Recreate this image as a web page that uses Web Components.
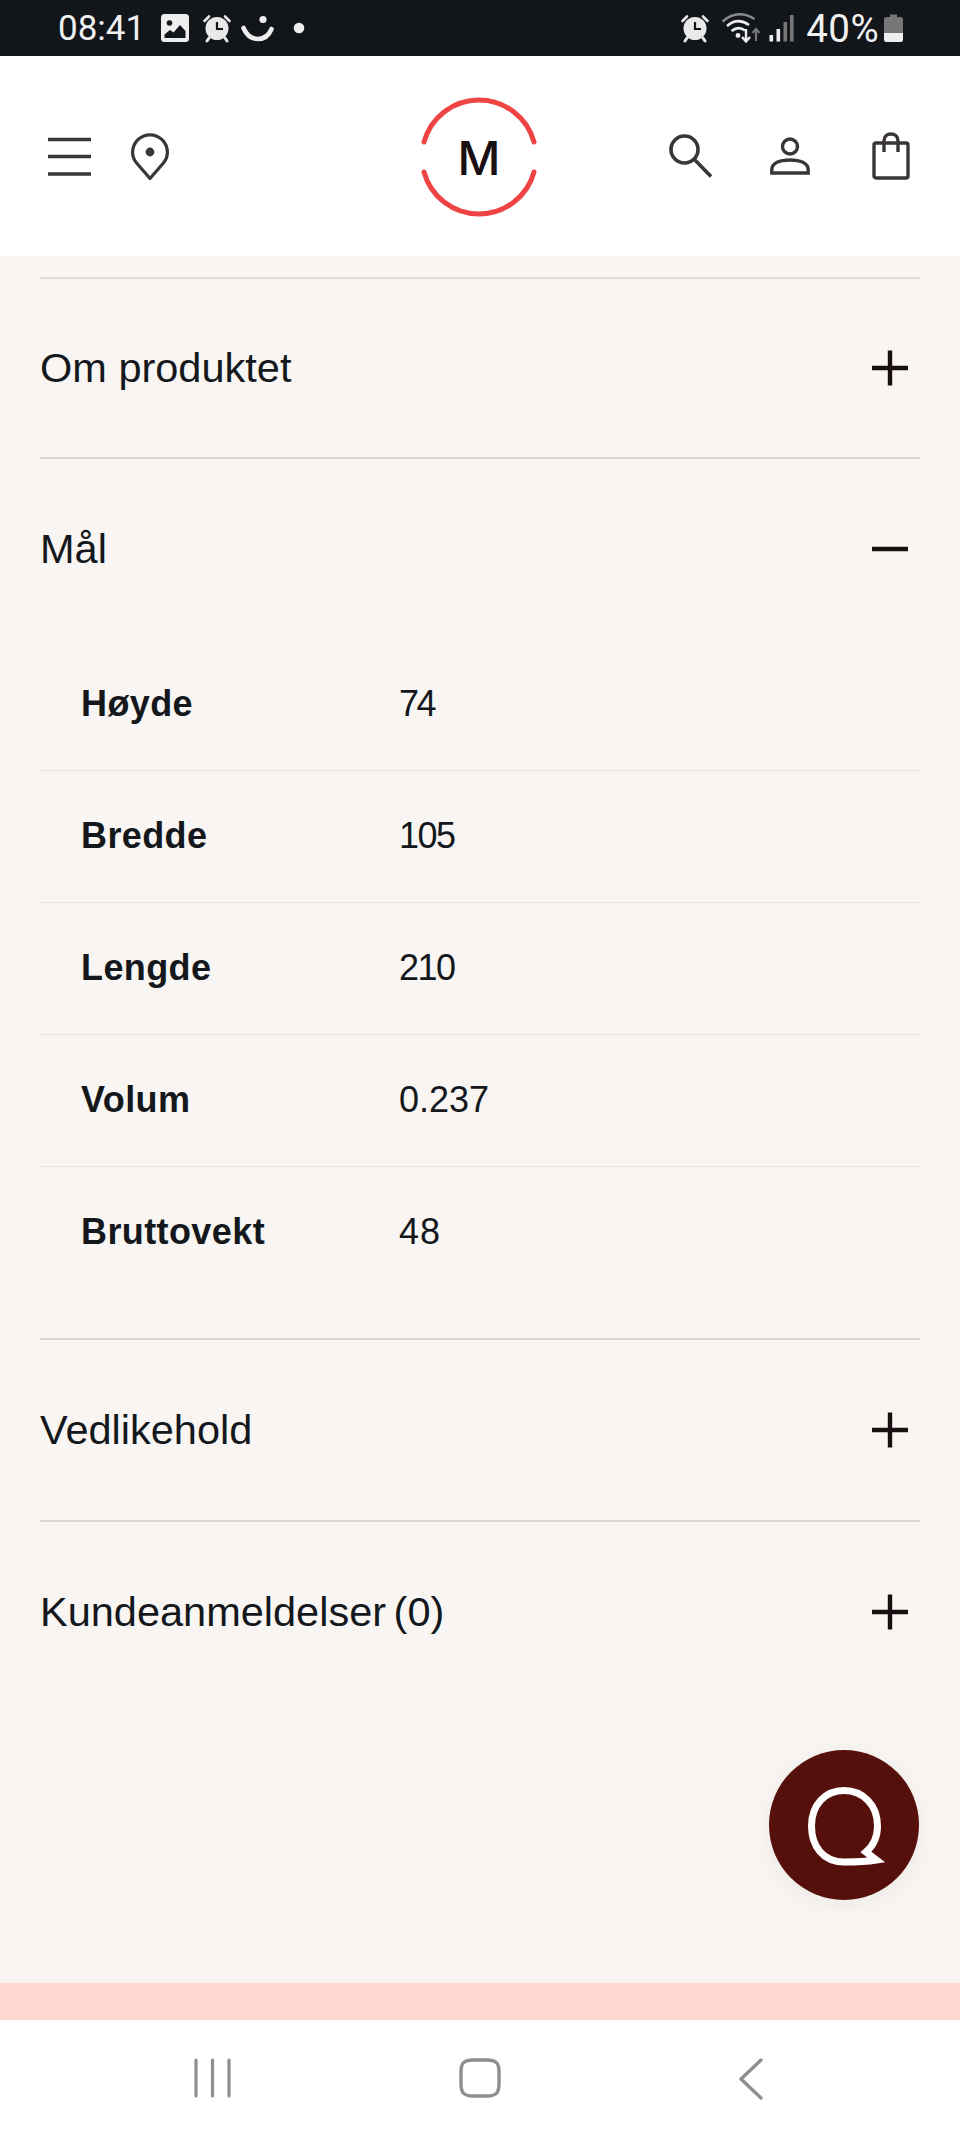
<!DOCTYPE html>
<html lang="no">
<head>
<meta charset="utf-8">
<title>Mål</title>
<style>
  html, body { margin: 0; padding: 0; }
  body {
    width: 960px; height: 2140px; overflow: hidden; position: relative;
    display: flex; flex-direction: column;
    background: #f8f5f2; color: #14181c;
    font-family: "Liberation Sans", Arial, sans-serif;
  }
  main { flex: 1; padding: 21px 40px 0; display: flex; flex-direction: column; }
</style>
</head>
<body>
<status-bar></status-bar>
<site-header></site-header>
<main>
  <accordion-item label="Om produktet" first></accordion-item>
  <accordion-item label="Mål" open>
    <spec-row name="Høyde" value="74" tight="-2.6"></spec-row>
    <spec-row name="Bredde" value="105" tight="-1.5"></spec-row>
    <spec-row name="Lengde" value="210" tight="-1.5"></spec-row>
    <spec-row name="Volum" value="0.237"></spec-row>
    <spec-row name="Bruttovekt" value="48" tight="1" last></spec-row>
  </accordion-item>
  <accordion-item label="Vedlikehold"></accordion-item>
  <accordion-item label="Kundeanmeldelser (0)" last></accordion-item>
</main>
<promo-strip></promo-strip>
<nav-bar></nav-bar>
<chat-button></chat-button>

<script>
// small helper, every element just sets its html in an open shadow root
function shadow(el, html) {
  el.attachShadow({ mode: 'open' }).innerHTML = html;
}

const alarmIcon = `
  <svg width="30" height="30" viewBox="0 0 30 30">
    <circle cx="15" cy="15.5" r="11.5" fill="#e9e9e9"/>
    <path d="M2.5 8 L7 3.5 M27.5 8 L23 3.5" stroke="#e9e9e9" stroke-width="2.6" stroke-linecap="round"/>
    <path d="M7 25 L5 28 M23 25 L25 28" stroke="#e9e9e9" stroke-width="3" stroke-linecap="round"/>
    <path d="M15 9 V16 H21" fill="none" stroke="#12151a" stroke-width="2.2"/>
  </svg>`;

class StatusBar extends HTMLElement {
  connectedCallback() {
    shadow(this, `
      <style>
        :host { display: flex; align-items: center; height: 56px; flex: none; background: #12151a; color: #f1f1f1;
          font-family: Roboto, "Liberation Sans", sans-serif; font-size: 35px; box-sizing: border-box; padding: 0 57px 0 58px; }
        .left, .right { display: flex; align-items: center; }
        .right { margin-left: auto; }
        svg { display: block; flex: none; }
        .pct { font-size: 38.5px; letter-spacing: .4px; margin: 0 5px 0 12px; }
      </style>
      <div class="left">
        <span>08:41</span>
        <svg style="margin-left:16px" width="28" height="28" viewBox="0 0 28 28">
          <rect width="28" height="28" rx="3.5" fill="#eeeeee"/>
          <circle cx="8.5" cy="9" r="2.8" fill="#12151a"/>
          <path d="M3.5 24 V20.5 L9 16 L12.5 18.5 L19 11 L24.5 17 V24 Z" fill="#12151a"/>
        </svg>
        <span style="margin-left:13px;display:flex">${alarmIcon}</span>
        <svg style="margin-left:9px" width="33" height="28" viewBox="0 0 33 28">
          <circle cx="22" cy="5.5" r="3.6" fill="#eeeeee"/>
          <path d="M2.5 14 C6 22 12 25 17 25 C23 25 28 21 30.5 15" fill="none" stroke="#eeeeee" stroke-width="4.6" stroke-linecap="round"/>
        </svg>
        <svg style="margin-left:19px" width="12" height="12" viewBox="0 0 12 12"><circle cx="6" cy="6" r="5.3" fill="#eeeeee"/></svg>
      </div>
      <div class="right">
        <span style="display:flex">${alarmIcon}</span>
        <svg style="margin-left:11px" width="42" height="32" viewBox="0 0 42 32">
          <path d="M1.5 9.5 C12 0.5 23 0.5 33.5 7" fill="none" stroke="#8a8a8a" stroke-width="2.4"/>
          <path d="M6 14 C13 8 21 8 28 13" fill="none" stroke="#eeeeee" stroke-width="2.6"/>
          <path d="M10.5 19 C15 15.5 20 15.5 24 18.5" fill="none" stroke="#eeeeee" stroke-width="2.6"/>
          <circle cx="17" cy="23.5" r="2.4" fill="#eeeeee"/>
          <path d="M25 17 V29 M21 25 L25 29.5 L29 25" fill="none" stroke="#eeeeee" stroke-width="2.4"/>
          <path d="M35 29 V17 M31.5 21 L35 17 L38.5 21" fill="none" stroke="#777777" stroke-width="2.2"/>
        </svg>
        <svg style="margin-left:6px" width="25" height="28" viewBox="0 0 25 28">
          <rect x="0.5" y="21" width="3.6" height="6.5" fill="#eeeeee"/>
          <rect x="7.5" y="15" width="3.6" height="12.5" fill="#eeeeee"/>
          <rect x="14.5" y="8" width="3.6" height="19.5" fill="#777777"/>
          <rect x="21" y="1" width="3.6" height="26.5" fill="#777777"/>
        </svg>
        <span class="pct">40%</span>
        <svg width="19" height="28" viewBox="0 0 19 28">
          <path d="M6 0.5 H13 V3 H16.5 Q19 3 19 5.5 V19 H0 V5.5 Q0 3 2.5 3 H6 Z" fill="#777777"/>
          <path d="M0 19 H19 V25.5 Q19 28 16.5 28 H2.5 Q0 28 0 25.5 Z" fill="#eeeeee"/>
        </svg>
      </div>
    `);
  }
}

class SiteHeader extends HTMLElement {
  connectedCallback() {
    shadow(this, `
      <style>
        :host { display: grid; grid-template-columns: 1fr auto 1fr; align-items: center; height: 200px; flex: none;
          background: #fff; box-sizing: border-box; padding: 0 50px 0 48px; color: #3a3536; }
        .left, .right { display: flex; align-items: center; }
        .right { justify-content: flex-end; }
        svg { display: block; flex: none; }
        .logo { position: relative; width: 122px; height: 122px; display: flex; align-items: center; justify-content: center;
          margin-top: 2px; }
        .logo svg { position: absolute; left: 0; top: 0; }
        .logo span { font: 500 47px Inter, "Liberation Sans", sans-serif; color: #1a1012; line-height: 1; }
      </style>
      <div class="left">
        <svg width="44" height="40" viewBox="0 0 44 40" stroke="currentColor" stroke-width="3.6">
          <path d="M0 3.5 H43 M0 20.5 H43 M0 38 H43"/>
        </svg>
        <svg style="margin-left:39px;margin-top:1px" width="38" height="48" viewBox="0 0 38 48" fill="none">
          <path d="M19 45.5 L6 30.5 C2.8 26.8 1.6 23.5 1.6 19.5 C1.6 9.5 9.4 1.8 19 1.8 C28.6 1.8 36.4 9.5 36.4 19.5 C36.4 23.5 35.2 26.8 32 30.5 Z" stroke="currentColor" stroke-width="3.2" stroke-linejoin="round"/>
          <circle cx="19" cy="19" r="4.4" fill="currentColor"/>
        </svg>
      </div>
      <div class="logo">
        <svg width="122" height="122" viewBox="0 0 122 122" fill="none" stroke="#ef4444" stroke-width="5" stroke-linecap="round">
          <path d="M6 46 A57 57 0 0 1 116 46"/>
          <path d="M6 76 A57 57 0 0 0 116 76"/>
        </svg>
        <span>M</span>
      </div>
      <div class="right">
        <svg width="44" height="44" viewBox="0 0 44 44" fill="none" stroke="currentColor" stroke-width="3.6">
          <circle cx="15.5" cy="15.5" r="13.5"/>
          <path d="M25 25 L42 42.5"/>
        </svg>
        <svg style="margin-left:57px" width="40" height="38" viewBox="0 0 40 38" fill="none" stroke="currentColor" stroke-width="3.4">
          <circle cx="20" cy="9.5" r="7.5"/>
          <path d="M1.8 36 V33 C1.8 26 10 23 20 23 C30 23 38.2 26 38.2 33 V36 Z"/>
        </svg>
        <svg style="margin-left:62px" width="38" height="48" viewBox="0 0 38 48" fill="none" stroke="currentColor" stroke-width="3.4" stroke-linejoin="round">
          <rect x="2" y="11" width="34" height="35" rx="2"/>
          <path d="M12 20 V9 C12 4.5 15 2 19 2 C23 2 26 4.5 26 9 V20"/>
        </svg>
      </div>
    `);
  }
}

class AccordionItem extends HTMLElement {
  connectedCallback() {
    const open = this.hasAttribute('open');
    const mark = open
      ? '<path d="M0 18 H36"/>'
      : '<path d="M0 18 H36 M18 0.5 V35.5"/>';
    shadow(this, `
      <style>
        :host { display: block; flex: none; border-bottom: 2px solid #d9d6d2; }
        :host([first]) { border-top: 2px solid #dedbd7; }
        :host([last]) { border-bottom: 0; }
        .head { display: flex; align-items: center; justify-content: space-between; height: 180px; padding-right: 12px; }
        :host([first]) .head { height: 178px; }
        .label { font-size: 41.5px; color: #14181c; margin-top: -1px; }
        :host([last]) .label { word-spacing: -4px; }
        svg { display: block; }
        .body { padding-bottom: 39px; }
      </style>
      <div class="head">
        <span class="label">${this.getAttribute('label')}</span>
        <svg width="36" height="36" viewBox="0 0 36 36" fill="none" stroke="#1a1012" stroke-width="4.4">${mark}</svg>
      </div>
      ${open ? '<div class="body"><slot></slot></div>' : ''}
    `);
  }
}

class SpecRow extends HTMLElement {
  connectedCallback() {
    const tight = this.getAttribute('tight') || 0;
    shadow(this, `
      <style>
        :host { display: flex; align-items: center; height: 129px; padding: 0 0 2px 40px; border-bottom: 1px solid #e6e3df;
          font-size: 36px; color: #14181c; }
        :host([last]) { border-bottom-color: transparent; }
        b { width: 319px; font-weight: 700; flex: none; letter-spacing: .4px; margin-left: 1px; }
        span { letter-spacing: ${tight}px; margin-left: -1px; }
      </style>
      <b>${this.getAttribute('name')}</b>
      <span>${this.getAttribute('value')}</span>
    `);
  }
}

class PromoStrip extends HTMLElement {
  connectedCallback() {
    shadow(this, `<style>:host { display: block; height: 37px; flex: none; background: #ffd9d0; }</style>`);
  }
}

class NavBar extends HTMLElement {
  connectedCallback() {
    shadow(this, `
      <style>
        :host { display: block; height: 120px; flex: none; background: #fff; }
        .row { display: grid; grid-template-columns: 196px 1fr 196px; padding: 38px 197px 0 194px; align-items: start; }
        svg { display: block; }
        .mid { justify-self: center; margin-left: 2px; }
        .end { justify-self: end; }
      </style>
      <div class="row">
        <svg width="38" height="40" viewBox="0 0 38 40" stroke="#8e8e8e" stroke-width="3.2" stroke-linecap="round">
          <path d="M2 2 V38 M18.5 2 V38 M35 2 V38"/>
        </svg>
        <svg class="mid" width="42" height="40" viewBox="0 0 42 40" fill="none" stroke="#8e8e8e" stroke-width="3.4">
          <path d="M14 2 H28 C37 2 40 5 40 14 V26 C40 35 37 38 28 38 H14 C5 38 2 35 2 26 V14 C2 5 5 2 14 2 Z"/>
        </svg>
        <svg class="end" width="24" height="42" viewBox="0 0 24 42" fill="none" stroke="#8e8e8e" stroke-width="3.4" stroke-linecap="round" stroke-linejoin="round">
          <path d="M22 2 L2 21 L22 40"/>
        </svg>
      </div>
    `);
  }
}

class ChatButton extends HTMLElement {
  connectedCallback() {
    shadow(this, `
      <style>
        :host { position: absolute; left: 769px; top: 1750px; width: 150px; height: 150px; border-radius: 50%;
          background: #55100b; box-shadow: 0 4px 24px rgba(60, 30, 20, .06); display: flex; align-items: center; justify-content: center; }
        svg { display: block; }
      </style>
      <svg width="150" height="150" viewBox="0 0 150 150" fill="none">
        <path d="M75 112 C54 112 42.5 96 42.5 76 C42.5 55 56 40.5 75 40.5 C94 40.5 108.5 55 108.5 76 C108.5 87 104 96 97 102 L107.5 110 C98 111.5 86 112 75 112 Z"
          stroke="#fff" stroke-width="7" stroke-linejoin="miter"/>
      </svg>
    `);
  }
}

customElements.define('status-bar', StatusBar);
customElements.define('site-header', SiteHeader);
customElements.define('accordion-item', AccordionItem);
customElements.define('spec-row', SpecRow);
customElements.define('promo-strip', PromoStrip);
customElements.define('nav-bar', NavBar);
customElements.define('chat-button', ChatButton);
</script>
</body>
</html>
